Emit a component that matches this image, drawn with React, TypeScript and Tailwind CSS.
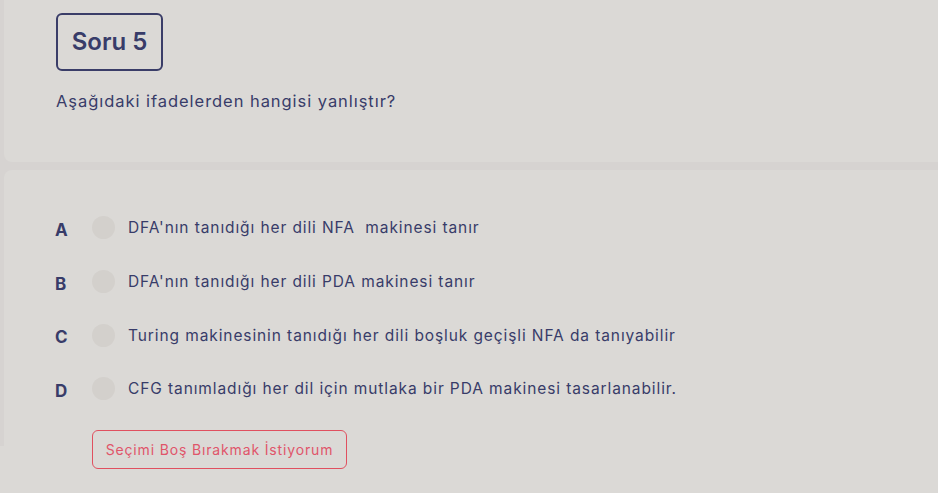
import React from "react";

const options = [
  { l: "A", t: "DFA'nın tanıdığı her dili NFA\u00a0 makinesi tanır" },
  { l: "B", t: "DFA'nın tanıdığı her dili PDA makinesi tanır" },
  { l: "C", t: "Turing makinesinin tanıdığı her dili boşluk geçişli NFA da tanıyabilir" },
  { l: "D", t: "CFG tanımladığı her dil için mutlaka bir PDA makinesi tasarlanabilir." },
];

export default function App() {
  return (
    <div
      className="min-h-screen w-[938px] overflow-hidden bg-[#dbd9d6] text-[#383c69]"
      style={{ fontFamily: "Inter, 'Open Sans', sans-serif" }}
    >
      <div className="h-[446px] bg-[#d6d3d1] pl-1">
        <div className="w-[1000px] rounded-bl-lg bg-[#dbd9d6] pl-[52px] pt-[13px] pb-[49px]">
          <div className="inline-flex h-[58px] w-[107px] items-center justify-center rounded-md border-2 border-[#3a3d68] text-[24px] font-semibold">
            Soru 5
          </div>
          <p className="mt-[18px] text-[16.5px] leading-6 tracking-[0.95px]">
            Aşağıdaki ifadelerden hangisi yanlıştır?
          </p>
        </div>
        <div className="mt-2 w-[1000px] rounded-tl-lg bg-[#dbd9d6] pl-[50px] pt-[31px] pb-[30px]">
          <div className="flex flex-col">
            {options.map((o) => (
              <div key={o.l} className="flex h-[53.7px] items-center">
                <span className="mt-[6px] w-[38px] pl-px text-[17px] font-bold">{o.l}</span>
                <span className="h-[23px] w-[23px] rounded-full bg-[#d3d0cc]"></span>
                <span className="ml-[13px] text-[15.5px] tracking-[0.9px]">{o.t}</span>
              </div>
            ))}
          </div>
          <button className="ml-[38px] mt-[14px] flex h-[39px] w-[255px] items-center justify-center rounded-md border border-[#e0505f] text-[14px] tracking-[0.85px] text-[#e0556a]">
            Seçimi Boş Bırakmak İstiyorum
          </button>
        </div>
      </div>
    </div>
  );
}
